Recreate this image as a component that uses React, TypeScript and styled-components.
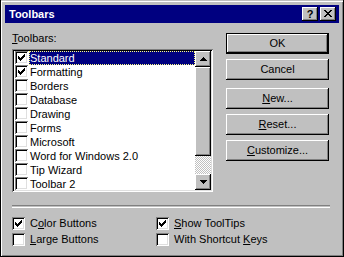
import React from 'react';
import styled, { createGlobalStyle, css } from 'styled-components';

const GlobalStyle = createGlobalStyle`
  html, body {
    margin: 0;
    padding: 0;
    background: #c0c0c0;
  }
  body {
    font-family: "Liberation Sans", Arial, sans-serif;
    font-size: 11px;
    color: #000;
  }
`;

const raised = css`
  box-shadow: inset -1px -1px 0 #000, inset 1px 1px 0 #fff, inset -2px -2px 0 #808080,
    inset 2px 2px 0 #c0c0c0;
`;

const sunken = css`
  box-shadow: inset 1px 1px 0 #808080, inset -1px -1px 0 #fff, inset 2px 2px 0 #000,
    inset -2px -2px 0 #dfdfdf;
`;

const Window = styled.div`
  width: 344px;
  height: 257px;
  box-sizing: border-box;
  padding: 5px 5px 0 5px;
  background: #c0c0c0;
  box-shadow: inset 1px 0 0 #000, inset -1px -1px 0 #000, inset 0 1px 0 #c0c0c0,
    inset 2px 2px 0 #fff, inset -2px -2px 0 #808080;
  overflow: hidden;
`;

const TitleBar = styled.div`
  height: 18px;
  background: #000080;
  display: flex;
  align-items: center;
  padding: 0 3px 0 4px;
`;

const TitleText = styled.div`
  flex: 1;
  color: #fff;
  font-weight: bold;
  font-size: 11px;
  line-height: 18px;
`;

const TitleButtons = styled.div`
  display: flex;
  gap: 2px;
`;

const CaptionButton = styled.div`
  width: 16px;
  height: 14px;
  box-sizing: border-box;
  background: #c0c0c0;
  ${raised};
  display: flex;
  align-items: center;
  justify-content: center;
  font-weight: bold;
  font-size: 11px;
  line-height: 14px;
  padding-bottom: 1px;
`;

const Body = styled.div`
  padding: 9px 10px 0 7px;
  display: flex;
  flex-direction: column;
`;

const MainRow = styled.div`
  display: flex;
  gap: 13px;
`;

const LeftCol = styled.div`
  display: flex;
  flex-direction: column;
  gap: 4px;
`;

const FieldLabel = styled.div`
  line-height: 13px;
  height: 13px;
`;

const ListBox = styled.div`
  width: 201px;
  height: 143px;
  box-sizing: border-box;
  padding: 2px;
  background: #fff;
  ${sunken};
  display: flex;
`;

const Items = styled.div`
  flex: 1;
  overflow: hidden;
  display: flex;
  flex-direction: column;
`;

const Row = styled.div`
  height: 14px;
  flex: 0 0 14px;
  display: flex;
  align-items: flex-start;
  padding-left: 1px;
`;

const Box = styled.div`
  width: 13px;
  height: 13px;
  flex: 0 0 13px;
  box-sizing: border-box;
  background: #fff;
  ${sunken};
  display: flex;
  align-items: center;
  justify-content: center;
`;

const ItemLabel = styled.div<{ $selected?: boolean }>`
  flex: 1;
  height: 14px;
  line-height: 14px;
  margin-left: 1px;
  padding-left: 1px;
  box-sizing: border-box;
  white-space: nowrap;
  ${(p) =>
    p.$selected &&
    css`
      background: #000080;
      color: #fff;
      outline: 1px dotted #ffff80;
      outline-offset: -1px;
    `}
`;

const ScrollBar = styled.div`
  width: 16px;
  display: flex;
  flex-direction: column;
`;

const ScrollButton = styled.div`
  height: 16px;
  flex: 0 0 16px;
  box-sizing: border-box;
  background: #c0c0c0;
  ${raised};
  display: flex;
  align-items: center;
  justify-content: center;
`;

const Thumb = styled.div`
  height: 89px;
  flex: 0 0 89px;
  box-sizing: border-box;
  background: #c0c0c0;
  ${raised};
`;

const Track = styled.div`
  flex: 1;
  background: repeating-conic-gradient(#c0c0c0 0 25%, #fff 0 50%) 0 0 / 2px 2px;
`;

const RightCol = styled.div`
  display: flex;
  flex-direction: column;
  padding-top: 1px;
  gap: 5px;
`;

const Button = styled.div<{ $default?: boolean; $gapBefore?: boolean }>`
  width: 103px;
  height: 21px;
  box-sizing: border-box;
  background: #c0c0c0;
  display: flex;
  align-items: center;
  justify-content: center;
  line-height: 13px;
  ${(p) =>
    p.$default
      ? css`
          box-shadow: inset 0 0 0 1px #000, inset -2px -2px 0 #000, inset 2px 2px 0 #fff,
            inset -3px -3px 0 #808080;
        `
      : raised};
  ${(p) =>
    p.$gapBefore &&
    css`
      margin-top: 3px;
    `}
`;

const Separator = styled.div`
  margin-top: 13px;
  margin-right: -1px;
  height: 1px;
  border-top: 1px solid #808080;
  border-bottom: 1px solid #fff;
`;

const Options = styled.div`
  margin-top: 8px;
  display: grid;
  grid-template-columns: 144px 1fr;
  grid-auto-rows: 16px;
`;

const Option = styled.div`
  display: flex;
  align-items: flex-start;
  gap: 5px;
  padding-left: 0;
  & > ${Box} {
    margin-top: 1px;
  }
`;

const OptionText = styled.div`
  line-height: 15px;
  white-space: nowrap;
`;

const Check = () => (
  <svg width="7" height="7" viewBox="0 0 7 7" shapeRendering="crispEdges">
    {[2, 3, 4, 3, 2, 1, 0].map((y, x) => (
      <rect key={x} x={x} y={y} width="1" height="3" fill="#000" />
    ))}
  </svg>
);

const CloseGlyph = () => (
  <svg width="8" height="7" viewBox="0 0 8 7" shapeRendering="crispEdges">
    <path
      fill="#000"
      d="M0 0h2v1h-2zM6 0h2v1h-2zM1 1h2v1h-2zM5 1h2v1h-2zM2 2h4v1h-4zM3 3h2v1h-2zM2 4h4v1h-4zM1 5h2v1h-2zM5 5h2v1h-2zM0 6h2v1h-2zM6 6h2v1h-2z"
    />
  </svg>
);

const Arrow = ({ down }: { down?: boolean }) => (
  <svg width="7" height="4" viewBox="0 0 7 4" shapeRendering="crispEdges">
    <path
      fill="#000"
      d={down ? 'M0 0h7v1h-7zM1 1h5v1h-5zM2 2h3v1h-3zM3 3h1v1h-1z' : 'M3 0h1v1h-1zM2 1h3v1h-3zM1 2h5v1h-5zM0 3h7v1h-7z'}
    />
  </svg>
);

const toolbars = [
  { name: 'Standard', checked: true },
  { name: 'Formatting', checked: true },
  { name: 'Borders', checked: false },
  { name: 'Database', checked: false },
  { name: 'Drawing', checked: false },
  { name: 'Forms', checked: false },
  { name: 'Microsoft', checked: false },
  { name: 'Word for Windows 2.0', checked: false },
  { name: 'Tip Wizard', checked: false },
  { name: 'Toolbar 2', checked: false },
];

const CheckBox = ({ checked }: { checked?: boolean }) => <Box>{checked && <Check />}</Box>;

export default function App() {
  return (
    <>
      <GlobalStyle />
      <Window>
        <TitleBar>
          <TitleText>Toolbars</TitleText>
          <TitleButtons>
            <CaptionButton>?</CaptionButton>
            <CaptionButton>
              <CloseGlyph />
            </CaptionButton>
          </TitleButtons>
        </TitleBar>
        <Body>
          <MainRow>
            <LeftCol>
              <FieldLabel>
                <u>T</u>oolbars:
              </FieldLabel>
              <ListBox>
                <Items>
                  {toolbars.map((t, i) => (
                    <Row key={t.name}>
                      <CheckBox checked={t.checked} />
                      <ItemLabel $selected={i === 0}>{t.name}</ItemLabel>
                    </Row>
                  ))}
                </Items>
                <ScrollBar>
                  <ScrollButton>
                    <Arrow />
                  </ScrollButton>
                  <Thumb />
                  <Track />
                  <ScrollButton>
                    <Arrow down />
                  </ScrollButton>
                </ScrollBar>
              </ListBox>
            </LeftCol>
            <RightCol>
              <Button $default>OK</Button>
              <Button>Cancel</Button>
              <Button $gapBefore>
                <span>
                  <u>N</u>ew...
                </span>
              </Button>
              <Button>
                <span>
                  <u>R</u>eset...
                </span>
              </Button>
              <Button>
                <span>
                  <u>C</u>ustomize...
                </span>
              </Button>
            </RightCol>
          </MainRow>
          <Separator />
          <Options>
            <Option>
              <CheckBox checked />
              <OptionText>
                C<u>o</u>lor Buttons
              </OptionText>
            </Option>
            <Option>
              <CheckBox checked />
              <OptionText>
                <u>S</u>how ToolTips
              </OptionText>
            </Option>
            <Option>
              <CheckBox />
              <OptionText>
                <u>L</u>arge Buttons
              </OptionText>
            </Option>
            <Option>
              <CheckBox />
              <OptionText>
                With Shortcut <u>K</u>eys
              </OptionText>
            </Option>
          </Options>
        </Body>
      </Window>
    </>
  );
}
